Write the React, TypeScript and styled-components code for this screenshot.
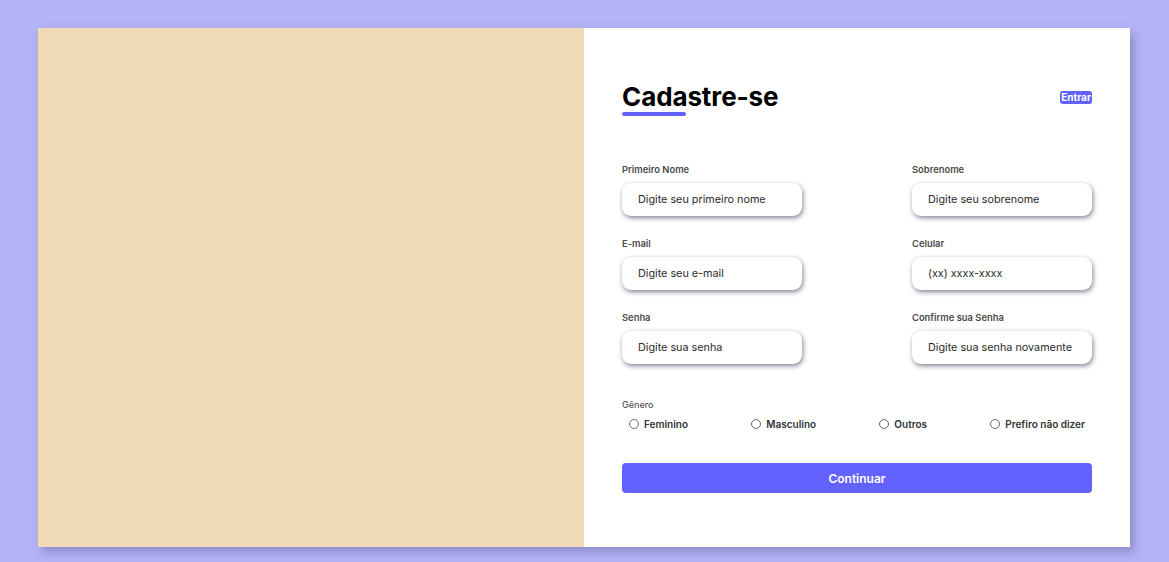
import React from "react";
import styled, { createGlobalStyle } from "styled-components";

const Global = createGlobalStyle`
  * { box-sizing: border-box; margin: 0; padding: 0; }
  html, body { height: 100%; }
  body {
    background: #b4b4f6;
    font-family: Inter, "Noto Sans", sans-serif;
    padding: 28px 39px 15px 38px;
  }
`;

const Card = styled.div`
  display: grid;
  grid-template-columns: 546px 546px;
  height: 519px;
  box-shadow: 4px 5px 10px rgba(60, 60, 120, 0.35);
`;

const Art = styled.div`
  background: #f0dab5;
`;

const FormPanel = styled.div`
  background: #ffffff;
  padding: 54px 38px 0 38px;
  display: flex;
  flex-direction: column;
`;

const Header = styled.div`
  display: flex;
  justify-content: space-between;
  align-items: flex-start;
`;

const TitleBox = styled.div`
  display: flex;
  flex-direction: column;
`;

const Title = styled.h1`
  font-size: 26px;
  font-weight: 700;
  color: #000;
  line-height: 30px;
  letter-spacing: -0.1px;
`;

const Underline = styled.div`
  width: 64px;
  height: 4px;
  border-radius: 2px;
  background: #6362ff;
  margin-top: 0;
`;

const EnterButton = styled.button`
  border: none;
  background: #6362ff;
  color: #fff;
  font-family: inherit;
  font-size: 10px;
  font-weight: 700;
  line-height: 13px;
  height: 13px;
  padding: 0 1px;
  border-radius: 3px;
  margin-top: 9px;
  cursor: pointer;
`;

const Grid = styled.div`
  display: grid;
  grid-template-columns: 180px 180px;
  justify-content: space-between;
  row-gap: 22px;
  margin-top: 48px;
`;

const Field = styled.div`
  display: flex;
  flex-direction: column;
`;

const Label = styled.label`
  font-size: 9.4px;
  font-weight: 600;
  color: #4a4a4a;
  line-height: 12px;
  margin-bottom: 7px;
`;

const Input = styled.input`
  height: 33px;
  border: none;
  border-radius: 9px;
  padding: 0 16px;
  font-family: inherit;
  font-size: 10.8px;
  color: #222;
  background: #fff;
  box-shadow: 1px 2px 5px rgba(30, 30, 60, 0.55);
  outline: none;
  &::placeholder { color: #2a2a2a; }
`;

const Gender = styled.div`
  margin-top: 35px;
  display: flex;
  flex-direction: column;
`;

const GenderLabel = styled.span`
  font-size: 9px;
  font-weight: 500;
  color: #555;
  line-height: 12px;
`;

const Options = styled.div`
  display: flex;
  justify-content: space-between;
  padding: 0 7px 0 7px;
  margin-top: 7px;
`;

const Option = styled.label`
  display: flex;
  align-items: center;
  gap: 5px;
  font-size: 10px;
  font-weight: 600;
  color: #333;
`;

const Radio = styled.span`
  width: 10px;
  height: 10px;
  border-radius: 50%;
  border: 1px solid #666;
  background: #fff;
`;

const Submit = styled.button`
  margin-top: 33px;
  height: 30px;
  border: none;
  border-radius: 4px;
  background: #6362ff;
  color: #fff;
  font-family: inherit;
  font-size: 12px;
  font-weight: 600;
  cursor: pointer;
`;

const fields = [
  { label: "Primeiro Nome", ph: "Digite seu primeiro nome" },
  { label: "Sobrenome", ph: "Digite seu sobrenome" },
  { label: "E-mail", ph: "Digite seu e-mail" },
  { label: "Celular", ph: "(xx) xxxx-xxxx" },
  { label: "Senha", ph: "Digite sua senha" },
  { label: "Confirme sua Senha", ph: "Digite sua senha novamente" },
];

const genders = ["Feminino", "Masculino", "Outros", "Prefiro não dizer"];

export default function App() {
  return (
    <>
      <Global />
      <Card>
        <Art />
        <FormPanel>
          <Header>
            <TitleBox>
              <Title>Cadastre-se</Title>
              <Underline />
            </TitleBox>
            <EnterButton>Entrar</EnterButton>
          </Header>
          <Grid>
            {fields.map((f) => (
              <Field key={f.label}>
                <Label>{f.label}</Label>
                <Input placeholder={f.ph} />
              </Field>
            ))}
          </Grid>
          <Gender>
            <GenderLabel>Gênero</GenderLabel>
            <Options>
              {genders.map((g) => (
                <Option key={g}>
                  <Radio />
                  {g}
                </Option>
              ))}
            </Options>
          </Gender>
          <Submit>Continuar</Submit>
        </FormPanel>
      </Card>
    </>
  );
}
